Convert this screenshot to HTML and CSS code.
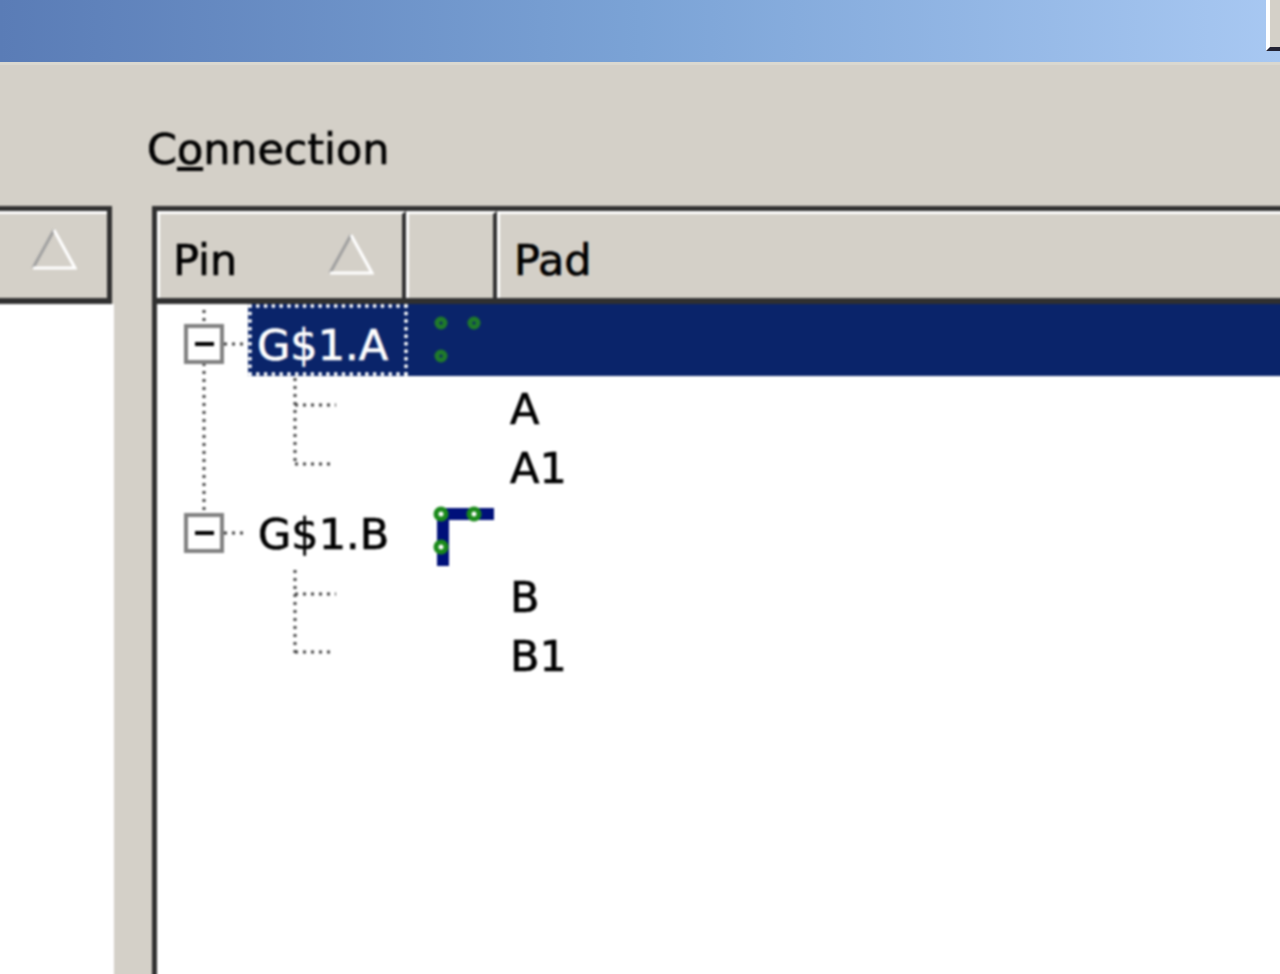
FILE: index.html
```html
<!DOCTYPE html>
<html lang="en">
<head>
    <meta charset="UTF-8">
    <title>Connection</title>
    <link rel="stylesheet" href="styles.css">
</head>
<body>
    <div class="titlebar">
        <div class="corner-button"></div>
    </div>
    <div class="client">
        <div class="left-pane">
            <div class="list-header">
                <svg class="sort-arrow" viewBox="0 0 46 44"><path class="arrow-dark" d="M2 41 L23 3"/><path class="arrow-light" d="M23 3 L44 41 L2 41"/></svg>
            </div>
            <div class="list-body"></div>
        </div>
        <div class="right-pane">
            <div class="pane-label">C<u>o</u>nnection</div>
            <div class="table">
                <div class="table-header">
                    <div class="col-head col-pin">
                        <span>Pin</span>
                        <svg class="sort-arrow" viewBox="0 0 46 44"><path class="arrow-dark" d="M2 41 L23 3"/><path class="arrow-light" d="M23 3 L44 41 L2 41"/></svg>
                    </div>
                    <div class="col-head col-icon"></div>
                    <div class="col-head col-pad"><span>Pad</span></div>
                </div>
                <div class="tree">
                    <!-- dotted tree lines and expand boxes lie over the rows -->
                    <svg class="tree-lines" width="400" height="400" viewBox="0 0 400 400">
                        <path class="dots" d="M47 6V21M47 59V206M67 40H91M67 229H89"/>
                        <path class="dots" d="M138 74V161M138 101H179M138 160H176M138 266V349M138 290H179M138 348H176"/>
                        <rect class="box" x="29" y="22" width="36" height="36"/>
                        <path class="minus" d="M38 40H57"/>
                        <rect class="box" x="29" y="211" width="36" height="36"/>
                        <path class="minus" d="M38 229H57"/>
                    </svg>

                    <div class="row row-parent row-selected">
                        <div class="cell-pin"><span class="node-label">G$1.A</span></div>
                        <div class="cell-icon">
                            <svg width="62" height="60" viewBox="0 0 62 60"><path class="wire wire-sel" d="M11 7H62M11 7V60"/><circle class="pad-dim" cx="9" cy="8" r="4"/><circle class="pad-dim" cx="42" cy="8" r="4"/><circle class="pad-dim" cx="9" cy="41" r="4"/></svg>
                        </div>
                        <div class="cell-pad"></div>
                    </div>
                    <div class="row row-child"><div class="cell-pin"></div><div class="cell-icon"></div><div class="cell-pad">A</div></div>
                    <div class="row row-child"><div class="cell-pin"></div><div class="cell-icon"></div><div class="cell-pad">A1</div></div>
                    <div class="row row-parent">
                        <div class="cell-pin"><span class="node-label">G$1.B</span></div>
                        <div class="cell-icon">
                            <svg width="62" height="60" viewBox="0 0 62 60"><path class="wire" d="M11 8H62M11 8V60"/><circle class="pad" cx="9" cy="8" r="5"/><circle class="pad" cx="42" cy="8" r="5"/><circle class="pad" cx="9" cy="41" r="5"/></svg>
                        </div>
                        <div class="cell-pad"></div>
                    </div>
                    <div class="row row-child"><div class="cell-pin"></div><div class="cell-icon"></div><div class="cell-pad">B</div></div>
                    <div class="row row-child"><div class="cell-pin"></div><div class="cell-icon"></div><div class="cell-pad">B1</div></div>
                </div>
            </div>
        </div>
    </div>
</body>
</html>
```

FILE: styles.css
```css
html, body {
    height: 100%;
}
body {
    margin: 0;
    height: 974px;
    overflow: hidden;
    display: flex;
    flex-direction: column;
    background-color: #d4d0c8;
    color: #000;
    font-family: 'DejaVu Sans', sans-serif;
    font-size: 43px;
    -webkit-text-stroke: 0.7px currentColor;
}
.titlebar {
    position: relative;
    height: 62px;
    flex: none;
    background: linear-gradient(to right, #5a7cb6 0%, #7ba3d6 50%, #a8c8f2 100%);
    border-bottom: 3px solid #dad8d0;
}
.corner-button {
    position: absolute;
    top: 0;
    right: 0;
    width: 10px;
    height: 47px;
    background-color: #d4d0c8;
    border-left: 4px solid #fff;
    border-bottom: 4px solid #223;
}
/* runs 4px past the window so the blur does not fade at the edges */
.client {
    flex: 1;
    display: flex;
    min-height: 0;
    margin: 0 -4px -4px;
    filter: blur(1px);
}
.left-pane {
    width: 118px;
    flex: none;
    padding-top: 141px;
    display: flex;
    flex-direction: column;
    box-sizing: border-box;
}
.list-header {
    height: 98px;
    flex: none;
    box-sizing: border-box;
    border-top: 5px solid #303030;
    border-bottom: 6px solid #303030;
    border-right: 5px solid #303030;
    margin-right: 2px;
    box-shadow: inset 0 3px 0 #fff;
    display: flex;
    justify-content: flex-end;
    align-items: center;
    padding-right: 30px;
}
.list-body {
    flex: 1;
    background-color: #fff;
}
.right-pane {
    flex: 1;
    min-width: 0;
    margin-left: 38px;
    display: flex;
    flex-direction: column;
}
.pane-label {
    height: 141px;
    flex: none;
    box-sizing: border-box;
    padding-top: 60px;
    margin-left: -5px;
    line-height: 48px;
    letter-spacing: -0.1px;
}
.table {
    flex: 1;
    display: flex;
    flex-direction: column;
    border-left: 5px solid #303030;
    background-color: #fff;
}
.table-header {
    height: 98px;
    flex: none;
    display: flex;
    box-sizing: border-box;
    border-top: 5px solid #303030;
    border-bottom: 6px solid #303030;
}
.col-head {
    box-sizing: border-box;
    background-color: #d4d0c8;
    border-left: 3px solid #fff;
    border-top: 3px solid #fff;
    border-right: 4px solid #303030;
    display: flex;
    align-items: center;
    justify-content: space-between;
    padding-top: 8px;
}
.col-pin {
    width: 249px;
    padding-left: 13px;
    padding-right: 28px;
}
.col-icon {
    width: 91px;
}
.col-pad {
    flex: 1;
    border-right: none;
    padding-left: 14px;
}
.sort-arrow {
    width: 46px;
    height: 44px;
    flex: none;
    margin-top: -12px;
}
.arrow-dark {
    stroke: #a0a0a0;
    stroke-width: 3;
    fill: none;
}
.arrow-light {
    stroke: #fff;
    stroke-width: 3;
    fill: none;
}
.tree {
    position: relative;
    flex: 1;
}
.tree-lines {
    position: absolute;
    top: 0;
    left: 0;
}
.dots {
    fill: none;
    stroke: #444;
    stroke-width: 3;
    stroke-dasharray: 3 5;
}
.box {
    fill: #fff;
    stroke: #808080;
    stroke-width: 4;
}
.minus {
    stroke: #000;
    stroke-width: 4;
}
.row {
    display: flex;
    align-items: center;
    height: 59px;
}
.row-parent {
    height: 70px;
}
.row-selected {
    color: #fff;
    height: 72px;
    background-image: linear-gradient(to right, #fff 0, #fff 246px, #0a246a 246px);
}
.cell-pin {
    width: 251px;
    flex: none;
    box-sizing: border-box;
    padding-left: 91px;
    height: 100%;
    display: flex;
    align-items: center;
}
.node-label {
    position: relative;
    left: 10px;
    top: 5px;
}
.row-selected .node-label {
    left: 0;
    top: 0;
    box-sizing: border-box;
    height: 72px;
    width: 160px;
    padding-left: 9px;
    line-height: 82px;
    background-color: #0a246a;
    outline: 4px dotted #fff;
    outline-offset: -4px;
    white-space: nowrap;
}
.cell-icon {
    width: 89px;
    flex: none;
    box-sizing: border-box;
    padding-left: 24px;
    display: flex;
    position: relative;
    top: 7px;
}
.row-selected .cell-icon {
    top: 5px;
}
.cell-pad {
    flex: 1;
    padding-left: 13px;
    padding-top: 7px;
    line-height: 59px;
}
.wire {
    fill: none;
    stroke: #00107a;
    stroke-width: 12;
}
.wire-sel {
    stroke: #0a246a;
}
.pad {
    fill: #fff;
    stroke: #1a8a1a;
    stroke-width: 5;
}
.pad-dim {
    fill: #0a246a;
    stroke: #1f7a2a;
    stroke-width: 5;
}
```
